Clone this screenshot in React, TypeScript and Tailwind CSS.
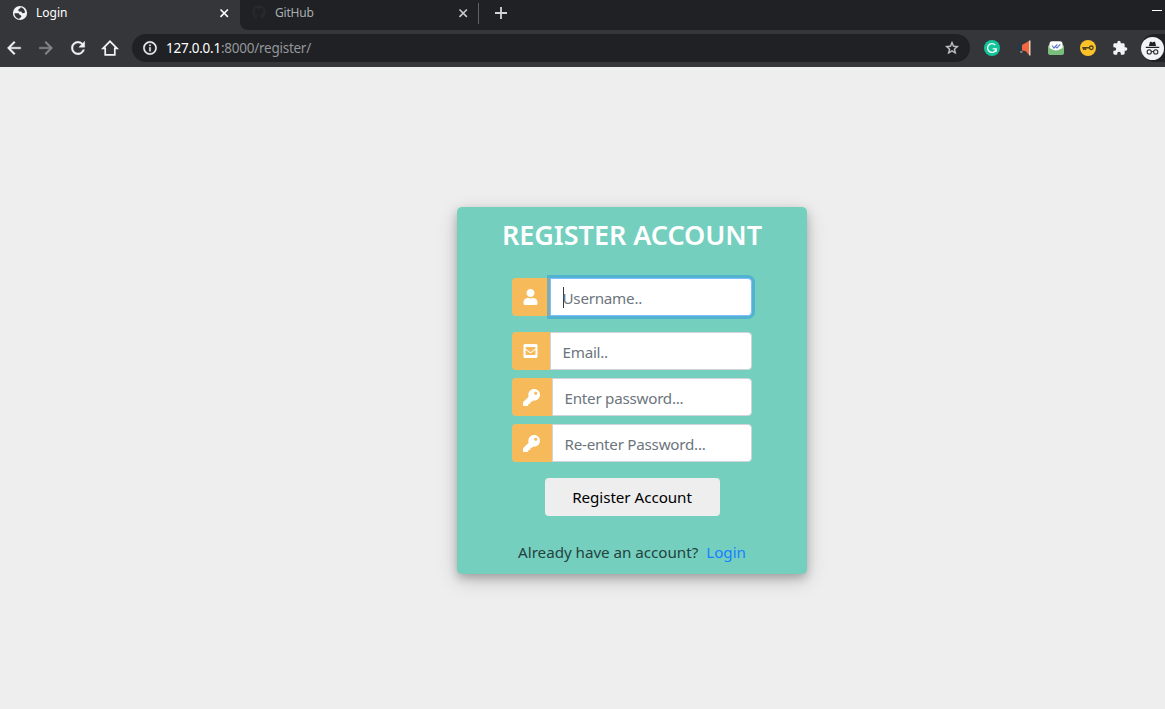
import type { ReactNode } from "react";
import { FaUser, FaEnvelopeSquare, FaGithub, FaKey } from "react-icons/fa";
import { MdArrowBack, MdArrowForward, MdRefresh, MdOutlineInfo, MdStarBorder, MdExtension } from "react-icons/md";

const boldIcon = "[&>path:last-child]:stroke-current [&>path:last-child]:[stroke-width:0.5]";

function CloseIcon({ className }: { className: string }) {
  return (
    <svg viewBox="0 0 14 14" className={`mt-[1px] h-[14px] w-[14px] ${className}`}>
      <path d="m3.5 3.5 7.4 7.4m0-7.4-7.4 7.4" stroke="currentColor" strokeWidth="1.6" />
    </svg>
  );
}

function TabStrip() {
  return (
    <div className="flex h-[30px] bg-[#202124] text-[12px]">
      <div className="flex h-full w-[240px] items-start bg-[#35363a] pl-[12px] pt-[5px] text-white">
        <svg viewBox="0 0 16 16" className="h-4 w-4 shrink-0">
          <circle cx="8" cy="8" r="7.1" fill="#f1f3f4" />
          <path d="M2.4 8.3h3.2c1.4 0 2 .6 2 1.8 1.2 0 1.9.5 1.7 1.6-.1.8-.8 1-1.6 1l-.3 1.2C4.7 13.7 2.5 11.4 2.4 8.3zM8.6 2.3c-.2 1-.9 1.5-2 1.6l-.2 1.7c0 .7.6 1 1.3 1h1.4c.8 0 .8.8.8 1.5 1.1.2 2.1 0 3.2-.6-.3-2.9-2-4.800-4.500-5.200z" fill="#35363a" />
        </svg>
        <span className="ml-2 h-4 w-[181px] leading-4">Login</span>
        <CloseIcon className="text-white" />
      </div>
      <div className="flex h-full w-[239px] bg-[#35363a]">
        <div className="flex h-full w-full items-start rounded-bl-[8px] bg-[#202124] pl-[12px] pt-[5px] text-[#a9adb1]">
          <FaGithub className="h-[14px] w-[14px] text-[#27292c]" />
          <span className="ml-[9px] h-4 w-[181px] leading-4 tracking-[-0.2px]">GitHub</span>
          <CloseIcon className="text-[#c8cacd]" />
        </div>
      </div>
      <div className="-ml-px mt-[3px] h-[21px] w-px bg-[#606266]" />
      <svg viewBox="0 0 14 14" className="ml-[15px] mt-[6px] h-[14px] w-[14px]">
        <path d="M7 1v12M1 7h12" stroke="#d2d4d7" strokeWidth="1.8" />
      </svg>
      <div className="ml-auto mr-[3px] mt-[10px] h-px w-[10px] bg-white" />
    </div>
  );
}

function Extensions() {
  return (
    <div className="flex flex-1 items-center pl-[14px]">
      <svg viewBox="0 0 16 16" className="mr-4 h-4 w-4">
        <circle cx="8" cy="8" r="8" fill="#15c39a" />
        <path d="M11.2 5A4.4 4.4 0 1 0 12.2 9.3M8.7 8.8h3.500v3" fill="none" stroke="#fff" strokeWidth="1.3" />
      </svg>
      <svg viewBox="0 0 16 16" className="mr-4 h-4 w-4">
        <path d="M1 4.5h4V10H1z" fill="#24394a" />
        <path d="M6 5 13 1v14l-3.500-4L6 10.500z" fill="#f4673f" />
        <path d="M13 .5h1.500v15H13z" fill="#ddd3c8" />
        <path d="m4 11.500 2.200-.3.300 1-2 .5z" fill="#b8bdc2" />
      </svg>
      <svg viewBox="0 0 16 16" className="mr-4 h-4 w-4">
        <path d="M0 6 3 3v11H2a2 2 0 0 1-2-2zm16 0-3-3v11h1a2 2 0 0 0 2-2z" fill="#79bd7b" />
        <rect x="1.5" y="1.3" width="13" height="9.5" rx="2.5" fill="#fff" />
        <path d="m0 7.500 8 3.500 8-3.500V13a2 2 0 0 1-2 2H2a2 2 0 0 1-2-2z" fill="#79bd7b" />
        <path d="m4 5.500 2 2.500L9.300 4.300M7.800 7 9 8l3.300-3.700" fill="none" stroke="#6478c8" strokeWidth="1.2" />
      </svg>
      <svg viewBox="0 0 16 16" className="mr-4 h-4 w-4">
        <circle cx="8" cy="8" r="8" fill="#fdc229" />
        <path d="M2.2 7.8H10M3.7 8v2M5.5 8v2" stroke="#4b4224" strokeWidth="1.5" />
        <circle cx="11.3" cy="7.8" r="1.8" fill="none" stroke="#4b4224" strokeWidth="1.3" />
      </svg>
      <MdExtension className="h-4 w-4 text-[#f1f3f4]" />
      <div className="ml-[13px] flex h-[28px] flex-1 items-center rounded-l-full bg-[#202124]">
        <svg viewBox="0 0 24 24" className="h-[23px] w-[23px] shrink-0">
          <circle cx="12" cy="12" r="12" fill="#f1f3f4" />
          <path d="M8.2 9.3 9.4 5h1.2l1.4.7 1.4-.7h1.2l1.2 4.3zM5 10.3h14v1.3H5z" fill="#202124" />
          <circle cx="8.6" cy="15.6" r="2.2" fill="none" stroke="#202124" strokeWidth="1.1" />
          <circle cx="15.4" cy="15.6" r="2.2" fill="none" stroke="#202124" strokeWidth="1.1" />
          <path d="M10.8 15.2h2.4" stroke="#202124" />
        </svg>
      </div>
    </div>
  );
}

function Toolbar() {
  return (
    <div className="flex h-[37px] items-center bg-[#35363a] pb-px pl-[4px] text-[#f1f3f4]">
      <MdArrowBack className={`mr-3 h-5 w-5 ${boldIcon}`} />
      <MdArrowForward className={`mr-3 h-5 w-5 text-[#85878a] ${boldIcon}`} />
      <MdRefresh className={`mr-3 h-5 w-5 ${boldIcon}`} />
      <svg viewBox="0 0 20 20" className="h-5 w-5">
        <path d="M3 10.3 10 3.300l7 7h-2.200v6.500H5.200v-6.500z" fill="none" stroke="currentColor" strokeWidth="1.7" />
      </svg>
      <div className="ml-[12px] flex h-[28px] w-[838px] items-center rounded-full bg-[#202124] px-[10px]">
        <MdOutlineInfo className={`h-4 w-4 ${boldIcon}`} />
        <span className="ml-2 text-[13.5px] tracking-[-0.25px] text-[#94979b]"><span className="text-white">127.0.0.1</span>:8000/register/</span>
        <MdStarBorder className={`ml-auto h-4 w-4 text-[#c7c9cc] ${boldIcon}`} />
      </div>
      <Extensions />
    </div>
  );
}

function Field({ icon, label, wide, focused, className }: { icon: ReactNode; label: string; wide?: boolean; focused?: boolean; className: string }) {
  return (
    <div className={`flex h-[38px] w-[240px] ${className}`}>
      <div className={`flex shrink-0 items-center rounded-l-[4px] bg-[#f7ba5b] pl-[11px] text-white ${wide ? "w-[40px]" : "w-[38px]"}`}>{icon}</div>
      <div className={`flex flex-1 items-center rounded-r-[4px] border bg-white pl-[11.5px] text-[15.2px] tracking-[-0.25px] text-[#6c757d] ${focused ? "border-[#80bdff] shadow-[0_0_0_3px_rgba(64,164,218,0.65)]" : "border-[#ced4da]"}`}>
        {focused && <span className="-mr-px h-[21px] w-px bg-[#343a40]" />}
        <span className="pt-[3px]">{label}</span>
      </div>
    </div>
  );
}

export default function App() {
  return (
    <div className="flex h-[709px] w-[1165px] flex-col overflow-hidden bg-[#eee] font-['Noto_Sans',sans-serif]">
      <TabStrip />
      <Toolbar />
      <main className="pl-[457px] pt-[140px]">
        <section className="flex h-[367px] w-[350px] flex-col items-center rounded-[5px] bg-[#74cfbf] shadow-[0_4px_8px_rgba(0,0,0,0.2),0_6px_20px_rgba(0,0,0,0.19)]">
          <h1 className="mt-[10px] h-[36px] whitespace-nowrap text-[27px] font-semibold leading-[36px] tracking-[-0.05px] text-white">REGISTER ACCOUNT</h1>
          <Field className="mt-[25px]" focused icon={<FaUser className="h-[16px] w-[15px]" />} label="Username.." />
          <Field className="mt-4" icon={<FaEnvelopeSquare className="h-[16px] w-[15px]" />} label="Email.." />
          <Field className="mt-2" wide icon={<FaKey className="h-[17px] w-[17px]" />} label="Enter password..." />
          <Field className="mt-2" wide icon={<FaKey className="h-[17px] w-[17px]" />} label="Re-enter Password..." />
          <button className="mt-4 h-[38px] w-[175px] rounded-[4px] bg-[#eee] text-[15.2px] tracking-[-0.05px] text-black">Register Account</button>
          <p className="mt-[24px] whitespace-nowrap text-[15.2px] leading-6 tracking-[-0.03px] text-[#24423e]">
            Already have an account?<a className="ml-2 text-[#187fff]">Login</a>
          </p>
        </section>
      </main>
    </div>
  );
}
